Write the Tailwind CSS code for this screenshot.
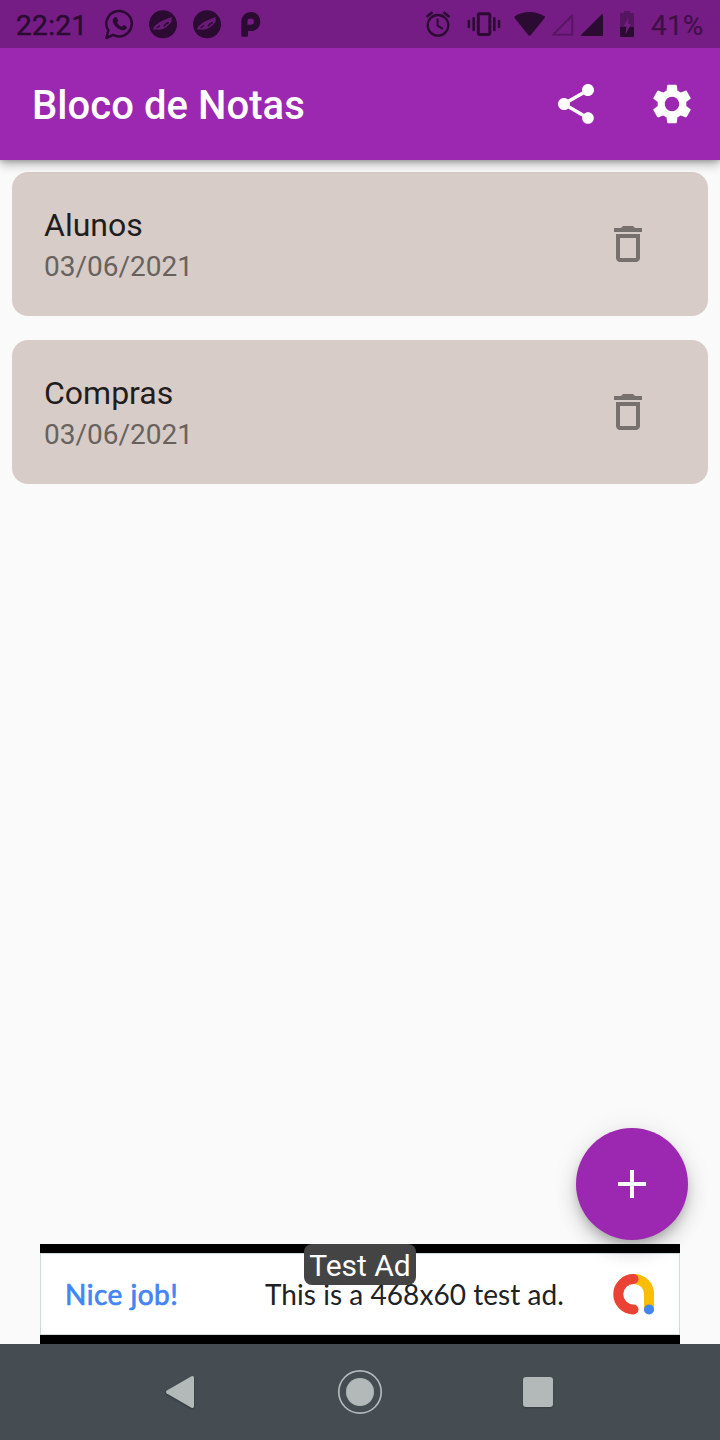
<!DOCTYPE html>
<html lang="pt-BR">
<head>
<meta charset="utf-8">
<meta name="viewport" content="width=device-width, initial-scale=1">
<title>Bloco de Notas</title>
<script src="https://cdn.jsdelivr.net/npm/@tailwindcss/browser@4"></script>
</head>
<body class="bg-[#fafafa]">
<div class="relative flex h-[1440px] w-[720px] flex-col overflow-hidden whitespace-nowrap bg-[#fafafa] font-['Roboto',sans-serif]">

  <!-- Status bar -->
  <header class="z-20 flex h-12 shrink-0 items-center bg-[#751d84] pl-4 text-[#2c0b33]">
    <span class="w-[88px] pt-[3px] text-[28px] leading-8"><span class="inline-block tracking-[0.35px] [-webkit-text-stroke:0.5px_#2c0b33]">22:21</span></span>
    <svg class="h-12 w-[30px]" viewBox="104 0 30 48" fill="none">
      <path d="M106.400 38 L108.300 30.500 A12.700 12.700 0 1 1 113 34.900 Z" stroke="currentColor" stroke-width="2.500" stroke-linejoin="round"/>
      <path d="M114.800 17.200c.8-.5 1.700-.4 2.100.5l1.200 2.600c.3.800-1 1.900-1 2.300.9 1.900 2.500 3.300 4.500 4.100.6 0 1.600-1.900 2.200-1.600l2.700 1.300c.6.400.2 1.900-.4 2.700-1.200 1.300-3.200 1.500-5.100.8-3.700-1.200-6.600-4-8-7.400-.7-2-.1-4.200 1.800-5.300z" fill="currentColor"/>
    </svg>
    <svg class="ml-[15px] h-12 w-[28px]" viewBox="149 0 28 48"><circle cx="163" cy="24.300" r="14" fill="currentColor"/><path d="M153 30L154 27C158 22 165 19.500 171.700 17L171.500 22C168 26 165 28.500 161 29.500C158 30 155.500 29 153 30Z" fill="#6b1a79"/><path d="M156.500 28L160 25.500M164 26.500c1-2.200 3-3.600 5-4" stroke="#2c0b33" stroke-width="1.500" fill="none"/></svg>
    <svg class="ml-4 h-12 w-[28px]" viewBox="149 0 28 48"><circle cx="163" cy="24.300" r="14" fill="currentColor"/><path d="M153 30L154 27C158 22 165 19.500 171.700 17L171.500 22C168 26 165 28.500 161 29.500C158 30 155.500 29 153 30Z" fill="#6b1a79"/><path d="M156.500 28L160 25.500M164 26.500c1-2.200 3-3.600 5-4" stroke="#2c0b33" stroke-width="1.500" fill="none"/></svg>
    <svg class="ml-5 h-12 w-5" viewBox="241 0 20 48"><path fill="currentColor" fill-rule="evenodd" d="M241.300 35.500V21.500A9.500 9.500 0 0 1 250.800 12C256.500 12 260.300 16 260.300 21.500S256.500 31 251 31H248V35.500Q248 36.700 246.800 36.700H242.500Q241.300 36.700 241.300 35.500ZM247.500 21.800V24.800H250.800A3.200 3.200 0 1 0 247.500 21.800Z"/></svg>

    <svg class="ml-[164px] h-12 w-[26px]" viewBox="425 0 26 48" fill="none" stroke="currentColor"><circle cx="438" cy="25.300" r="10.300" stroke-width="2.300"/><path d="M437.600 18.500v7.200l5.200 3.200" stroke-width="2"/><path d="M426.500 17l6-4.700M449.500 17l-6-4.700" stroke-width="2.700"/></svg>
    <svg class="ml-4 h-12 w-[34px]" viewBox="467 0 34 48" fill="none" stroke="currentColor" stroke-linecap="round"><rect x="478.300" y="13.700" width="11.500" height="20.800" rx="1.500" stroke-width="2.900"/><path d="M473.700 18.200v11.800M494.300 18.200v11.800M468.900 21v6M499 21v6" stroke-width="2.600"/></svg>
    <svg class="ml-[13px] h-12 w-8" viewBox="514 0 32 48"><path fill="currentColor" d="M514.300 16.500C519 13.500 524 12 529.500 12S540 13.500 545 16.500Q545 17.500 544.300 18.400L530.800 35Q529.500 36.400 528.200 35L515 18.400Q514.300 17.500 514.300 16.500Z"/></svg>
    <svg class="ml-[5px] h-12 w-[23px]" viewBox="551 0 23 48"><path d="M572.200 15.500V34.700H553Z" fill="none" stroke="#5a1665" stroke-width="2.100" stroke-linejoin="round"/></svg>
    <svg class="ml-[7px] h-12 w-[23px]" viewBox="581 0 23 48"><path fill="currentColor" d="M603 15V35Q603 36 602 36H582Q580 36 581.500 34.400L601.500 14.400Q603 13 603 15Z"/></svg>
    <svg class="ml-4 h-12 w-[14px]" viewBox="620 0 14 48"><path fill="#561561" d="M624 11h6v2h4v14h-14V13h4z"/><path fill="currentColor" d="M620 27h14v8.500q0 1.500-1.500 1.500h-11q-1.500 0-1.500-1.500z"/><path fill="#751d84" d="M628.500 17.500L623.800 26h2.700l-1 8.500 5.500-10.500h-2.800z"/></svg>
    <span class="ml-[17px] pt-[3px] text-[28px] leading-8 tracking-[0.2px] text-[#3f1048] [-webkit-text-stroke:0.2px_#3f1048]">41%</span>
  </header>

  <!-- App bar -->
  <nav class="z-10 flex h-28 shrink-0 items-center bg-[#9c27b0] pr-6 pl-8 text-white shadow-[0_4px_10px_rgba(0,0,0,.3),0_1px_5px_rgba(0,0,0,.2)]">
    <h1 class="flex-1 pt-[4px] text-[40px] leading-[48px] font-medium tracking-[0.05px]">Bloco de Notas</h1>
    <svg class="size-12" viewBox="0 0 24 24" fill="currentColor"><path d="M18 16.080c-.76 0-1.440.3-1.960.77L8.910 12.700c.05-.23.09-.46.09-.7s-.04-.47-.09-.7l7.050-4.110c.54.5 1.250.81 2.040.81 1.660 0 3-1.340 3-3s-1.340-3-3-3-3 1.340-3 3c0 .24.04.47.09.7L8.040 9.810C7.500 9.310 6.790 9 6 9c-1.660 0-3 1.340-3 3s1.340 3 3 3c.79 0 1.500-.31 2.040-.81l7.120 4.160c-.05.21-.08.43-.08.65 0 1.610 1.310 2.920 2.920 2.920s2.920-1.310 2.920-2.920-1.310-2.920-2.920-2.920z"/></svg>
    <svg class="ml-12 size-12" viewBox="0 0 24 24" fill="currentColor"><path d="M19.140 12.940c.04-.3.06-.61.06-.94 0-.32-.02-.64-.07-.94l2.030-1.580c.18-.14.23-.41.12-.61l-1.920-3.320c-.12-.22-.37-.29-.59-.22l-2.390.96c-.5-.38-1.030-.7-1.620-.94l-.36-2.540c-.04-.24-.24-.41-.48-.41h-3.840c-.24 0-.43.17-.47.41l-.36 2.540c-.59.24-1.130.57-1.620.94l-2.390-.96c-.22-.08-.47 0-.59.22L2.740 8.870c-.12.21-.08.47.12.61l2.030 1.580c-.05.3-.09.63-.09.94s.02.64.07.94l-2.030 1.580c-.18.14-.23.41-.12.61l1.920 3.320c.12.22.37.29.59.22l2.390-.96c.5.38 1.030.7 1.620.94l.36 2.540c.05.24.24.41.48.41h3.840c.24 0 .44-.17.47-.41l.36-2.540c.59-.24 1.130-.56 1.620-.94l2.390.96c.22.08.47 0 .59-.22l1.920-3.320c.12-.22.07-.47-.12-.61l-2.010-1.580zM12 15.600c-1.980 0-3.600-1.620-3.600-3.600s1.620-3.600 3.600-3.600 3.600 1.620 3.600 3.600-1.620 3.600-3.600 3.600z"/></svg>
  </nav>

  <!-- Notes -->
  <main class="flex flex-1 flex-col gap-6 p-3">
    <article class="flex h-36 items-center rounded-2xl bg-[#d7ccc8] pr-14 pl-8">
      <div class="flex-1">
        <h2 class="text-[32px] leading-[44px] text-[#1f1d1d]">Alunos</h2>
        <p class="-mb-px pt-px text-[28px] leading-[38px] text-[#68625f]">03/06/2021</p>
      </div>
      <svg class="size-12" viewBox="0 0 24 24" fill="#76706e"><path d="M6 19c0 1.100.9 2 2 2h8c1.100 0 2-.9 2-2V7H6v12zM8 9h8v10H8V9zm7.500-5l-1-1h-5l-1 1H5v2h14V4z"/></svg>
    </article>
    <article class="flex h-36 items-center rounded-2xl bg-[#d7ccc8] pr-14 pl-8">
      <div class="flex-1">
        <h2 class="text-[32px] leading-[44px] text-[#1f1d1d]">Compras</h2>
        <p class="-mb-px pt-px text-[28px] leading-[38px] text-[#68625f]">03/06/2021</p>
      </div>
      <svg class="size-12" viewBox="0 0 24 24" fill="#76706e"><path d="M6 19c0 1.100.9 2 2 2h8c1.100 0 2-.9 2-2V7H6v12zM8 9h8v10H8V9zm7.500-5l-1-1h-5l-1 1H5v2h14V4z"/></svg>
    </article>
  </main>

  <!-- Banner -->
  <section class="relative mx-10 h-[100px] shrink-0 bg-black py-[9px]">
    <div class="flex h-[82px] items-center border border-[#cfdadd] bg-white pr-[25px] pl-6 font-['Lato',sans-serif] text-[#202124]">
      <span class="w-[200px] pb-px text-[28px] tracking-[0.5px] text-[#4285f4] [-webkit-text-stroke:0.7px_#4285f4]">Nice job!</span>
      <span class="flex-1 pb-px text-[28px] tracking-[0.05px]">This is a 468x60 test ad.</span>
      <svg class="h-[42px] w-[42px]" viewBox="0 0 42 42" fill="none" stroke-width="10" stroke-linecap="round"><path d="M22 6C30.500 6 37 12.500 37 21V36" stroke="#fbbc04"/><path d="M21.500 6A15.250 15.250 0 0 0 21.500 36.500" stroke="#ea4335"/><circle cx="37" cy="36.500" r="5" fill="#4285f4"/></svg>
    </div>
    <span class="absolute top-0 left-[264px] flex h-[41px] w-28 items-center justify-center rounded-lg bg-[#444] pt-[3px] text-[30px] leading-9 text-white">Test Ad</span>
  </section>

  <button aria-label="Adicionar" class="absolute top-[1128px] left-[576px] flex size-28 items-center justify-center rounded-full bg-[#9c27b0] text-white shadow-[0_6px_10px_-2px_rgba(0,0,0,.2),0_12px_20px_rgba(0,0,0,.14),0_2px_28px_rgba(0,0,0,.08)]">
    <svg class="size-12" viewBox="0 0 24 24" fill="currentColor"><path d="M19 13h-6v6h-2v-6H5v-2h6V5h2v6h6v2z"/></svg>
  </button>

  <!-- System navigation -->
  <footer class="z-10 flex h-24 shrink-0 items-center bg-[#454d52] pl-[164px] text-[#b3b8b9]">
    <svg class="h-10 w-8 drop-shadow-[0_1px_1px_rgba(0,0,0,.3)]" viewBox="164 1372 32 40" fill="currentColor"><path d="M166.800 1390.500L191 1376.500Q194 1375 194 1378V1406Q194 1409 191 1407.500L166.800 1393.500Q165.200 1392 166.800 1390.500Z"/></svg>
    <svg class="ml-[140px] size-12" viewBox="0 0 48 48"><circle cx="24" cy="24" r="21.200" fill="none" stroke="currentColor" stroke-width="1.700"/><circle cx="24" cy="24" r="14" fill="currentColor"/></svg>
    <span class="ml-[139px] size-[30px] rounded-[3px] bg-[#b3b8b9] shadow-[0_1px_2px_rgba(0,0,0,.25)]"></span>
  </footer>
</div>
</body>
</html>
